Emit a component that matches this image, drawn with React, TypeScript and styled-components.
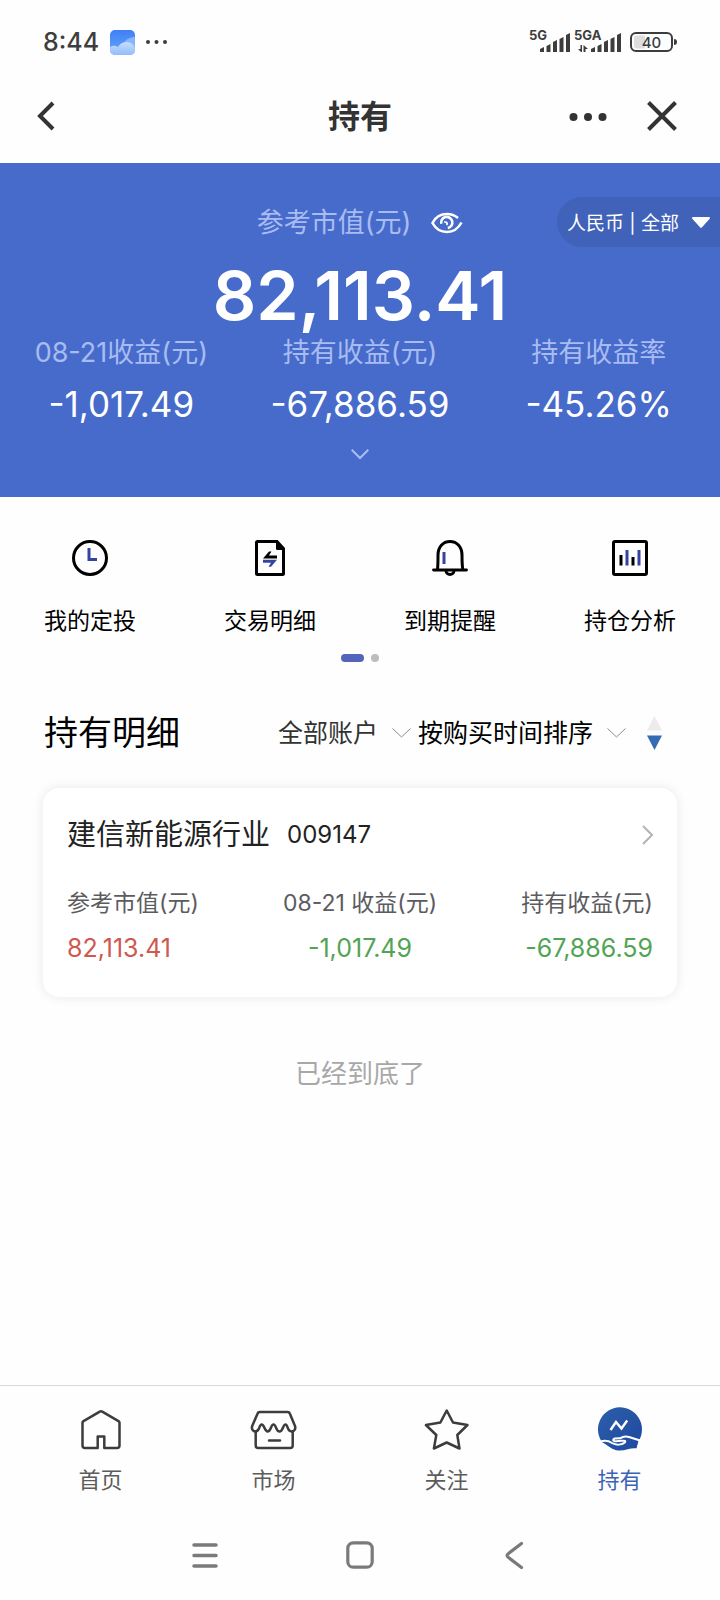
import React from "react";
import styled, { createGlobalStyle } from "styled-components";

const GlobalStyle = createGlobalStyle`
  *, *::before, *::after { box-sizing: border-box; }
  body {
    margin: 0;
    background: #fefefe;
    color: #000;
    font-family: Inter, "Noto Sans CJK SC", sans-serif;
    -webkit-font-smoothing: antialiased;
  }
  button, select { font: inherit; color: inherit; }
  svg { display: block; flex: none; }
`;

const Page = styled.div`
  min-height: 100vh;
  display: flex;
  flex-direction: column;
`;

const StatusBar = styled.div`
  display: flex;
  align-items: center;
  justify-content: space-between;
  height: 69px;
  padding: 28px 42px 13px 43px;
  color: #3d3d3d;
`;

const StatusGroup = styled.div`
  display: flex;
  align-items: center;
  gap: 11px;
`;

const Clock = styled.time`
  font-size: 25px;
  font-weight: 500;
  line-height: 28px;
`;

const TitleBar = styled.header`
  display: grid;
  grid-template-columns: 1fr auto 1fr;
  align-items: center;
  height: 94px;
  padding: 0 37px;
  color: #333;
`;

const Title = styled.h1`
  margin: 0;
  padding-top: 2px;
  font-size: 32px;
  font-weight: 700;
  line-height: 44px;
`;

const TitleActions = styled.div`
  display: flex;
  justify-content: flex-end;
  gap: 40px;
`;

const IconButton = styled.button`
  display: flex;
  align-items: center;
  justify-content: center;
  width: max-content;
  padding: 0;
  border: 0;
  background: none;
  cursor: pointer;
`;

const Summary = styled.section`
  padding: 34px 0 33px;
  background: #476bcb;
  color: #fff;
`;

const SummaryTop = styled.div`
  display: grid;
  grid-template-columns: 1fr auto 1fr;
  align-items: center;
  height: 50px;
`;

const MarketLabel = styled.div`
  grid-column: 2;
  display: flex;
  align-items: center;
  gap: 20px;
  padding-top: 2px;
  font-size: 27px;
  line-height: 36px;
  color: #a9bcf2;
`;

const SelectBox = styled.div`
  position: relative;
  display: flex;
  align-items: center;
`;

const CurrencyBox = styled(SelectBox)`
  justify-self: end;
`;

const SelectArrow = styled.span<{ $right: number }>`
  position: absolute;
  right: ${(p) => p.$right}px;
  pointer-events: none;
`;

const CurrencySelect = styled.select`
  appearance: none;
  height: 50px;
  padding: 2px 40px 0 10px;
  border: 0;
  border-radius: 25px 0 0 25px;
  background: #4062b9;
  color: #fff;
  font-size: 19px;
`;

const Total = styled.p`
  margin: 12px 0 2px;
  text-align: center;
  font-size: 68px;
  font-weight: 600;
  line-height: 72px;
`;

const SummaryStats = styled.dl`
  display: grid;
  grid-template-columns: repeat(3, 1fr);
  margin: 0 2px 18px;
  text-align: center;
`;

const SummaryTerm = styled.dt`
  font-size: 27px;
  line-height: 39px;
  color: #a9bcf2;
`;

const SummaryValue = styled.dd`
  margin: 10px 0 0;
  font-size: 35px;
  line-height: 44px;
`;

const ExpandButton = styled(IconButton)`
  height: 20px;
  margin: 0 auto;
`;

const Shortcuts = styled.nav`
  display: grid;
  grid-template-columns: repeat(4, 1fr);
  padding-top: 43px;
`;

const Shortcut = styled.a`
  display: flex;
  flex-direction: column;
  align-items: center;
  gap: 28px;
  font-size: 23px;
  line-height: 34px;
  color: #000;
  text-decoration: none;
`;

const Pager = styled.div`
  display: flex;
  justify-content: center;
  gap: 7px;
  margin-top: 16px;
`;

const PagerDot = styled.span<{ $active?: boolean }>`
  width: ${(p) => (p.$active ? 23 : 8)}px;
  height: 8px;
  border-radius: 4px;
  background: ${(p) => (p.$active ? "#5365bb" : "#bdbdbd")};
`;

const ListHeader = styled.div`
  display: flex;
  align-items: center;
  margin-top: 47px;
  padding: 0 58px 0 44px;
`;

const ListTitle = styled.h2`
  margin: 0 auto 0 0;
  font-size: 34px;
  font-weight: 400;
  line-height: 48px;
`;

const FilterSelect = styled.select<{ $color: string }>`
  appearance: none;
  height: 40px;
  padding: 0 32px 0 0;
  border: 0;
  background: transparent;
  color: ${(p) => p.$color};
  font-size: 25px;
`;

const Filters = styled.div`
  display: flex;
  align-items: center;
  gap: 7px;
  margin-right: 21px;
`;

const Card = styled.article`
  margin: 31px 43px 0;
  padding: 26px 24px 33px;
  border-radius: 16px;
  background: #fff;
  box-shadow: 0 0 12px rgba(0, 0, 0, 0.09);
`;

const FundLink = styled.a`
  display: flex;
  align-items: center;
  gap: 17px;
  line-height: 42px;
  color: #222;
  text-decoration: none;
`;

const FundName = styled.h3`
  margin: 0;
  font-size: 29px;
  font-weight: 400;
`;

const FundCode = styled.span`
  margin-right: auto;
  font-size: 24px;
  line-height: 40px;
`;

const CardStats = styled.dl`
  display: grid;
  grid-template-columns: repeat(3, 1fr);
  margin: 30px 0 0;
`;

const CardStat = styled.div<{ $align: string }>`
  text-align: ${(p) => p.$align};
`;

const CardTerm = styled.dt`
  font-size: 23px;
  line-height: 34px;
  color: #5c5c60;
`;

const CardValue = styled.dd<{ $tone: "up" | "down" }>`
  margin: 12px 0 0;
  font-size: 25px;
  line-height: 32px;
  color: ${(p) => (p.$tone === "up" ? "#cf584f" : "#52a455")};
`;

const EndNote = styled.p`
  margin: 61px 0;
  text-align: center;
  font-size: 26px;
  line-height: 32px;
  color: #a8a8a8;
`;

const TabBar = styled.nav`
  display: grid;
  grid-template-columns: repeat(4, 1fr);
  margin-top: auto;
  padding: 21px 14px 16px;
  border-top: 1px solid #d9d9d9;
`;

const Tab = styled.a<{ $active?: boolean }>`
  display: flex;
  flex-direction: column;
  align-items: center;
  gap: 15px;
  font-size: 22px;
  line-height: 28px;
  color: ${(p) => (p.$active ? "#3c62b8" : "#5c5c5c")};
  text-decoration: none;
`;

const SystemNav = styled.div`
  display: flex;
  align-items: center;
  justify-content: center;
  gap: 127px;
  height: 90px;
`;

const WeatherIcon = () => (
  <svg width="25" height="25" viewBox="0 0 25 25">
    <defs>
      <linearGradient id="sky" x1="0" y1="0" x2="0" y2="1">
        <stop offset="0" stopColor="#3f7ff5" />
        <stop offset="1" stopColor="#66a9fb" />
      </linearGradient>
      <linearGradient id="cloud" x1="0" y1="0" x2="0" y2="1">
        <stop offset="0" stopColor="#c6dcfd" />
        <stop offset="1" stopColor="#92bdfb" />
      </linearGradient>
      <clipPath id="tile">
        <rect width="25" height="25" rx="5" />
      </clipPath>
    </defs>
    <g clipPath="url(#tile)">
      <rect width="25" height="25" fill="url(#sky)" />
      <path d="M13 14c3-5 7-7 12-7v11H12z" fill="#84b6fb" />
      <path d="M0 17c4-2 6-1 8 0 2-4 6-5 9-5 4 0 7 3 8 6v7H0z" fill="url(#cloud)" />
    </g>
  </svg>
);

const StatusDots = () => (
  <svg width="21" height="6" viewBox="0 0 21 6" fill="#3d3d3d">
    <circle cx="2" cy="3" r="2" />
    <circle cx="10.5" cy="3" r="2" />
    <circle cx="19" cy="3" r="2" />
  </svg>
);

const Bars = ({ x }: { x: number }) => (
  <>
    {[19, 16, 12, 9, 5].map((top, i) => (
      <path key={top} d={`M${x + i * 6.5} ${top + 2}l4-2V24h-4z`} />
    ))}
  </>
);

const SignalAndBattery = () => (
  <svg width="150" height="28" viewBox="0 0 150 28" fill="#3d3d3d">
    <text x="1" y="12" fontSize="13" fontWeight="700">5G</text>
    <Bars x={12} />
    <text x="46" y="12" fontSize="13" fontWeight="700">5GA</text>
    <path d="M50 21h2.5v-4H54v7h-1zM55.500 17l4.500 4h-2.500v3H55.500z" />
    <Bars x={63} />
    <rect x="103" y="5" width="41" height="18" rx="5" fill="none" stroke="#3d3d3d" strokeWidth="2" />
    <path d="M109 7.500h8v13h-8a3 3 0 0 1-3-3v-7a3 3 0 0 1 3-3z" fill="#dedede" />
    <path d="M146 11c2 0 3 1 3 3s-1 3-3 3z" />
    <text x="123.500" y="19.500" fontSize="15" fontWeight="500" textAnchor="middle">40</text>
  </svg>
);

const BackIcon = () => (
  <svg width="20" height="32" viewBox="0 0 20 32" fill="none" stroke="#333" strokeWidth="4">
    <path d="M16 3 3 16l13 13" />
  </svg>
);

const MoreIcon = () => (
  <svg width="38" height="32" viewBox="0 0 38 32" fill="#333">
    <circle cx="4.500" cy="17" r="4" />
    <circle cx="19" cy="17" r="4" />
    <circle cx="33.500" cy="17" r="4" />
  </svg>
);

const CloseIcon = () => (
  <svg width="36" height="32" viewBox="0 0 36 32" stroke="#333" strokeWidth="4">
    <path d="M1.500 2.500l27 27M28.500 2.500l-27 27" />
  </svg>
);

const EyeIcon = () => (
  <svg width="32" height="22" viewBox="0 0 32 22" fill="none" stroke="#fff" strokeWidth="2.600">
    <path d="M27 6C24 3.500 20 2 16 2 9 2 4 6 1.500 11 4.500 16.500 9.500 20 16 20c6.500 0 11.500-4 14.500-9.500" />
    <path d="M10.300 11.800a5.600 5.600 0 1 1 6.500 4.200" />
    <path d="M13.200 10.200c2.300-.6 3.600.9 2.600 3" strokeWidth="1.800" />
  </svg>
);

const TriangleDown = () => (
  <svg width="18" height="11" viewBox="0 0 18 11">
    <path d="M1 0h16a1 1 0 0 1 .7 1.700L10 10.300a1.400 1.400 0 0 1-2 0L.3 1.700A1 1 0 0 1 1 0z" fill="#fff" />
  </svg>
);

const ThinChevron = () => (
  <svg width="19" height="10" viewBox="0 0 19 10" fill="none" stroke="#8c8c8c">
    <path d="M.5.5 9.500 9l9-8.500" />
  </svg>
);

const ExpandIcon = () => (
  <svg width="18" height="11" viewBox="0 0 18 11" fill="none" stroke="#a9bcf2" strokeWidth="2">
    <path d="M.7.700 9 9l8.300-8.300" />
  </svg>
);

const ClockIcon = () => (
  <svg width="36" height="36" viewBox="0 0 36 36" fill="none">
    <circle cx="18" cy="18" r="16.500" stroke="#000" strokeWidth="3" />
    <path d="M17 8v11.500h8" stroke="#34449f" strokeWidth="3" />
  </svg>
);

const RecordsIcon = () => (
  <svg width="36" height="36" viewBox="0 0 36 36" fill="none">
    <path d="M5.500 1.500H25l6.500 7v25a1 1 0 0 1-1 1h-25a1 1 0 0 1-1-1v-31a1 1 0 0 1 1-1z" stroke="#000" strokeWidth="3" />
    <path d="M24 0v8.500a1.500 1.500 0 0 0 1.500 1.500H33z" fill="#000" />
    <path d="M11 18.500l6-7h2.500l-2.500 4h8v3z" fill="#000" />
    <path d="M11 19.700h14l-6 7h-2.500l2.500-4h-8z" fill="#34449f" />
  </svg>
);

const BellIcon = () => (
  <svg width="36" height="36" viewBox="0 0 36 36" fill="none" stroke="#000">
    <path d="M5.500 29.500C6 25 6 21 6 15 6 7 11 1.500 18 1.500S30 7 30 15c0 6 0 10 .8 14.500" strokeWidth="3" />
    <path d="M1.500 30h33" strokeWidth="2.800" strokeLinecap="round" />
    <path d="M14 31c0 2 1.800 3.500 4 3.500s4-1.500 4-3.500" strokeWidth="2.800" />
    <path d="M12 12v12" stroke="#34449f" strokeWidth="3" />
  </svg>
);

const AnalysisIcon = () => (
  <svg width="36" height="36" viewBox="0 0 36 36" fill="none">
    <rect x="1.500" y="1.500" width="33" height="33" rx="1.500" stroke="#000" strokeWidth="3" />
    <path d="M9 15v10.500M21 17v8.500" stroke="#000" strokeWidth="3" />
    <path d="M15 10v15.500M27 10v15.500" stroke="#34449f" strokeWidth="3" />
  </svg>
);

const SortIcon = () => (
  <svg width="15" height="34" viewBox="0 0 15 34">
    <path d="M7.500 0 15 14.500H0z" fill="#ececec" />
    <path d="M0 19.500h15L7.500 34z" fill="#346bb3" />
  </svg>
);

const ForwardIcon = () => (
  <svg width="11" height="20" viewBox="0 0 11 20" fill="none" stroke="#b3b3b8" strokeWidth="2">
    <path d="M1 1l9 9-9 9" />
  </svg>
);

const TabIcon = styled.svg.attrs({ width: 44, height: 44, viewBox: "0 0 44 44", fill: "none" })`
  stroke: #3c3c3c;
  stroke-width: 2.5;
  stroke-linejoin: round;
  stroke-linecap: round;
  overflow: visible;
`;

const HomeIcon = () => (
  <TabIcon>
    <path d="M20.800 4.600 4.500 14.200a2 2 0 0 0-1 1.600V38.500a2.500 2.500 0 0 0 2.500 2.500h12.700V29.500h6.600V41H38a2.500 2.500 0 0 0 2.500-2.500V15.800a2 2 0 0 0-1-1.600L23.200 4.600a2.400 2.400 0 0 0-2.400 0z" />
  </TabIcon>
);

const MarketIcon = () => (
  <TabIcon>
    <path d="M7.700 5h28c1 0 1.800.6 2.100 1.500L43 19c1 3-.8 5.500-3.300 5.500-5 0-3.500-7-6.200-7s-2.500 7-6 7-3.300-7-6-7-2.500 7-5.800 7-3.200-7-6-7-1.700 7-6.200 7C1 24.500-.8 22 .2 19L5.600 6.500C5.900 5.600 6.700 5 7.700 5z" />
    <path d="M3.700 24.500v14A2.500 2.500 0 0 0 6.200 41h32a2.500 2.500 0 0 0 2.500-2.500v-14M17 33.500h11" />
  </TabIcon>
);

const StarIcon = () => (
  <TabIcon>
    <path d="M21.700 3.500 28 15.500 42.500 18 32.300 28l2.200 13.500-12.800-6-12.800 6L11.300 28 .9 18l14.500-2.500z" />
  </TabIcon>
);

const HoldingIcon = () => (
  <svg width="44" height="44" viewBox="0 0 44 44" fill="none">
    <defs>
      <linearGradient id="coin" x1="0" y1="0" x2="1" y2="1">
        <stop offset="0" stopColor="#2c5fa9" />
        <stop offset="1" stopColor="#1e48a0" />
      </linearGradient>
    </defs>
    <path d="M3 33.500a22 22 0 1 1 38.500-1L38.500 41.500C33 40.500 28 44 20 43.500 15 43 10 39 3 35z" fill="url(#coin)" />
    <path d="M12.500 23l5.500-8 5.500 6.500 5.700-8" stroke="#fff" strokeWidth="2.400" />
    <path
      d="M2.500 34.500C8 33 11 34 14 36c4 2.500 10 2 12.700-.5 1.300-1.500.3-2-2.700-1.700l-6 .5c-3.500 0-3.500-2.300-1-2.700l5-.3c3-2 6-2.300 9-1.300l11 3.500"
      stroke="#fff"
      strokeWidth="2"
    />
    <path d="M0 34.500c8 0 10 7.500 19 9.500H0z" fill="#fefefe" />
    <path d="M44 32.500l-3.500 1.500L38 44h6z" fill="#fefefe" />
  </svg>
);

const MenuIcon = () => (
  <svg width="28" height="28" viewBox="0 0 28 28" stroke="#7a7a7a" strokeWidth="3.500" strokeLinecap="round">
    <path d="M3 4h22M3 14.500h22M3 25h22" />
  </svg>
);

const SquareIcon = () => (
  <svg width="28" height="28" viewBox="0 0 28 28" fill="none" stroke="#7a7a7a" strokeWidth="3.200">
    <rect x="1.800" y="1.800" width="24.400" height="24.400" rx="5.500" />
  </svg>
);

const SystemBackIcon = () => (
  <svg width="28" height="28" viewBox="0 0 28 28" fill="none" stroke="#7a7a7a" strokeWidth="3.200" strokeLinecap="round">
    <path d="M20.500 2.500 7.200 12.700q-2.300 1.800 0 3.600L20.500 26.500" />
  </svg>
);

const summaryStats = [
  { term: "08-21收益(元)", value: "-1,017.49" },
  { term: "持有收益(元)", value: "-67,886.59" },
  { term: "持有收益率", value: "-45.26%" },
];

const shortcuts = [
  { label: "我的定投", icon: <ClockIcon /> },
  { label: "交易明细", icon: <RecordsIcon /> },
  { label: "到期提醒", icon: <BellIcon /> },
  { label: "持仓分析", icon: <AnalysisIcon /> },
];

const cardStats = [
  { term: "参考市值(元)", value: "82,113.41", tone: "up" as const, align: "left" },
  { term: "08-21 收益(元)", value: "-1,017.49", tone: "down" as const, align: "center" },
  { term: "持有收益(元)", value: "-67,886.59", tone: "down" as const, align: "right" },
];

const tabs = [
  { label: "首页", icon: <HomeIcon /> },
  { label: "市场", icon: <MarketIcon /> },
  { label: "关注", icon: <StarIcon /> },
  { label: "持有", icon: <HoldingIcon />, active: true },
];

export default function App() {
  return (
    <Page>
      <GlobalStyle />
      <StatusBar>
        <StatusGroup>
          <Clock>8:44</Clock>
          <WeatherIcon />
          <StatusDots />
        </StatusGroup>
        <SignalAndBattery />
      </StatusBar>
      <TitleBar>
        <IconButton aria-label="返回"><BackIcon /></IconButton>
        <Title>持有</Title>
        <TitleActions>
          <IconButton aria-label="更多"><MoreIcon /></IconButton>
          <IconButton aria-label="关闭"><CloseIcon /></IconButton>
        </TitleActions>
      </TitleBar>

      <main>
        <Summary>
          <SummaryTop>
            <MarketLabel>
              参考市值(元)
              <IconButton aria-label="隐藏金额"><EyeIcon /></IconButton>
            </MarketLabel>
            <CurrencyBox>
              <CurrencySelect aria-label="币种">
                <option>人民币 | 全部</option>
              </CurrencySelect>
              <SelectArrow $right={10}><TriangleDown /></SelectArrow>
            </CurrencyBox>
          </SummaryTop>
          <Total>82,113.41</Total>
          <SummaryStats>
            {summaryStats.map((s) => (
              <div key={s.term}>
                <SummaryTerm>{s.term}</SummaryTerm>
                <SummaryValue>{s.value}</SummaryValue>
              </div>
            ))}
          </SummaryStats>
          <ExpandButton aria-label="展开"><ExpandIcon /></ExpandButton>
        </Summary>

        <Shortcuts>
          {shortcuts.map((s) => (
            <Shortcut key={s.label} href="#">
              {s.icon}
              {s.label}
            </Shortcut>
          ))}
        </Shortcuts>
        <Pager>
          <PagerDot $active />
          <PagerDot />
        </Pager>

        <ListHeader>
          <ListTitle>持有明细</ListTitle>
          <Filters>
            <SelectBox>
              <FilterSelect $color="#333" aria-label="账户">
                <option>全部账户</option>
              </FilterSelect>
              <SelectArrow $right={0}><ThinChevron /></SelectArrow>
            </SelectBox>
            <SelectBox>
              <FilterSelect $color="#000" aria-label="排序">
                <option>按购买时间排序</option>
              </FilterSelect>
              <SelectArrow $right={0}><ThinChevron /></SelectArrow>
            </SelectBox>
          </Filters>
          <IconButton aria-label="降序"><SortIcon /></IconButton>
        </ListHeader>

        <Card>
          <FundLink href="#">
            <FundName>建信新能源行业</FundName>
            <FundCode>009147</FundCode>
            <ForwardIcon />
          </FundLink>
          <CardStats>
            {cardStats.map((s) => (
              <CardStat key={s.term} $align={s.align}>
                <CardTerm>{s.term}</CardTerm>
                <CardValue $tone={s.tone}>{s.value}</CardValue>
              </CardStat>
            ))}
          </CardStats>
        </Card>
        <EndNote>已经到底了</EndNote>
      </main>

      <TabBar>
        {tabs.map((t) => (
          <Tab key={t.label} href="#" $active={t.active} aria-current={t.active ? "page" : undefined}>
            {t.icon}
            {t.label}
          </Tab>
        ))}
      </TabBar>
      <SystemNav>
        <IconButton aria-label="最近任务"><MenuIcon /></IconButton>
        <IconButton aria-label="主屏幕"><SquareIcon /></IconButton>
        <IconButton aria-label="系统返回"><SystemBackIcon /></IconButton>
      </SystemNav>
    </Page>
  );
}
